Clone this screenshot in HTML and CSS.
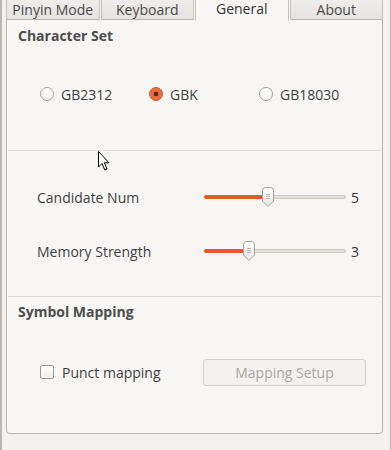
FILE: index.html
```html
<!DOCTYPE html>
<html>
<head>
<meta charset="utf-8">
<link rel="stylesheet" href="styles.css">
</head>
<body>
<div class="window">
  <div class="tabs">
    <div class="tab">Pinyin Mode</div>
    <div class="tab">Keyboard</div>
    <div class="tab active">General</div>
    <div class="tab">About</div>
  </div>
  <div class="panel">
    <section class="sec sec-charset">
      <div class="heading">Character Set</div>
      <div class="radios">
        <label class="radio"><span class="rb"></span>GB2312</label>
        <label class="radio"><span class="rb on"></span>GBK</label>
        <label class="radio"><span class="rb"></span>GB18030</label>
      </div>
    </section>
    <hr class="sep">
    <section class="sec sec-sliders">
      <div class="srow">
        <span class="slabel">Candidate Num</span>
        <div class="slider">
          <div class="track"><div class="fill" style="width:63px"></div></div>
          <svg class="thumb" style="left:58px" width="12" height="20" viewBox="0 0 12 20"><defs><linearGradient id="tg1" x1="0" y1="0" x2="0" y2="1"><stop offset="0" stop-color="#ffffff"/><stop offset="1" stop-color="#e9e6e3"/></linearGradient></defs><path d="M3.5 0.5 H8.5 Q11.5 0.5 11.5 3.5 V14 L6 19.5 L0.5 14 V3.5 Q0.5 0.5 3.5 0.5 Z" fill="url(#tg1)" stroke="#a9a199"/><path d="M4 7.5 H8 M4 9.5 H8 M4 11.5 H8" stroke="#b9b2ab" stroke-width="1"/></svg>
        </div>
        <span class="sval">5</span>
      </div>
      <div class="srow">
        <span class="slabel">Memory Strength</span>
        <div class="slider">
          <div class="track"><div class="fill" style="width:44px"></div></div>
          <svg class="thumb" style="left:39px" width="12" height="20" viewBox="0 0 12 20"><defs><linearGradient id="tg2" x1="0" y1="0" x2="0" y2="1"><stop offset="0" stop-color="#ffffff"/><stop offset="1" stop-color="#e9e6e3"/></linearGradient></defs><path d="M3.5 0.5 H8.5 Q11.5 0.5 11.5 3.5 V14 L6 19.5 L0.5 14 V3.5 Q0.5 0.5 3.5 0.5 Z" fill="url(#tg2)" stroke="#a9a199"/><path d="M4 7.5 H8 M4 9.5 H8 M4 11.5 H8" stroke="#b9b2ab" stroke-width="1"/></svg>
        </div>
        <span class="sval">3</span>
      </div>
    </section>
    <hr class="sep">
    <section class="sec sec-symbol">
      <div class="heading">Symbol Mapping</div>
      <div class="crow">
        <label class="check"><span class="cb"></span>Punct mapping</label>
        <button class="btn" disabled>Mapping Setup</button>
      </div>
    </section>
  </div>
  <svg class="cursor" width="14" height="22" viewBox="0 0 14 22"><path d="M0.5 0.5 V16 L4 12.5 L6.8 19 L9 18 L6.3 11.8 H11 Z" fill="#ffffff" stroke="#000000" stroke-width="1" stroke-linejoin="miter"/></svg>
</div>
</body>
</html>
```
FILE: styles.css
```css
* { box-sizing: border-box; }
html, body { margin: 0; padding: 0; }
body {
  width: 391px;
  height: 450px;
  overflow: hidden;
  background: #f2f1f0;
  font-family: "Open Sans", "DejaVu Sans", sans-serif;
  font-size: 14px;
  color: #3c3c3c;
}
.window {
  position: relative;
  height: 450px;
  border-left: 2px solid #bdb6af;
  border-right: 1px solid #bdb6af;
  padding: 0 7px 0 4px;
}
.tabs {
  display: flex;
  height: 20px;
}
.tab {
  flex: 1;
  text-align: center;
  line-height: 19px;
  height: 20px;
  color: #4a4a4a;
  background: linear-gradient(#efedeb, #e4e1de);
  border: 1px solid #c9c3bd;
  border-top: none;
  border-bottom: 1px solid #bdb6af;
  margin-right: 1px;
}
.tab:last-child { margin-right: 0; }
.tab.active {
  background: #f7f6f5;
  border-bottom-color: #f7f6f5;
  line-height: 17px;
  color: #333;
  position: relative;
  z-index: 1;
  margin-bottom: -1px;
  height: 21px;
}
.panel {
  background: #f7f6f5;
  border: 1px solid #bdb6af;
  border-top: none;
  border-radius: 0 0 4px 4px;
  height: 414px;
  display: flex;
  flex-direction: column;
}
.heading {
  font-weight: bold;
  color: #4d4d4d;
  padding-left: 11px;
  height: 18px;
  line-height: 18px;
}
.sec-charset { padding-top: 7px; height: 130px; }
.radios {
  display: flex;
  margin-top: 40px;
  height: 18px;
  align-items: center;
}
.radio {
  display: flex;
  align-items: center;
  gap: 7px;
  color: #3f3f3f;
}
.radio:nth-child(1) { margin-left: 33px; width: 109px; }
.radio:nth-child(2) { width: 110px; }
.rb {
  width: 14px;
  height: 14px;
  border-radius: 50%;
  border: 1px solid #a9a29b;
  background: linear-gradient(#ffffff, #f3f1ef);
  display: inline-block;
}
.rb.on {
  border-color: #c4552b;
  background: radial-gradient(circle, #5a2a1a 0 2px, #e2683b 2.6px, #f07a49 100%);
}
.sep {
  margin: 0 1px;
  border: none;
  border-top: 1px solid #dedbd8;
  height: 0;
}
.sec-sliders { height: 145px; padding-top: 35px; }
.srow {
  display: flex;
  align-items: center;
  height: 22px;
  margin-bottom: 32px;
}
.slabel {
  width: 197px;
  padding-left: 30px;
  color: #3f3f3f;
}
.slider {
  position: relative;
  width: 142px;
  height: 22px;
}
.track {
  position: absolute;
  left: 0;
  right: 0;
  top: 9px;
  height: 4px;
  border-radius: 2px;
  background: #e5e1dd;
  border: 1px solid #cdc6bf;
}
.fill {
  position: absolute;
  left: -1px;
  top: -1px;
  height: 4px;
  border-radius: 2px;
  background: #e2592a;
}
.thumb {
  position: absolute;
  top: 1px;
}
.sval {
  margin-left: 5px;
  color: #333;
}
.sec-symbol { padding-top: 6px; flex: 1; }
.crow {
  display: flex;
  align-items: center;
  margin-top: 37px;
  height: 28px;
}
.check {
  display: flex;
  align-items: center;
  gap: 8px;
  margin-left: 33px;
  width: 163px;
  color: #3f3f3f;
}
.cb {
  width: 14px;
  height: 14px;
  border-radius: 2px;
  border: 1px solid #9f968e;
  background: linear-gradient(#ffffff, #f1efed);
  display: inline-block;
}
.btn {
  width: 163px;
  height: 27px;
  font: inherit;
  color: #aca6a0;
  background: #f3f2f1;
  border: 1px solid #d6d1cc;
  border-radius: 3px;
}
.cursor {
  position: absolute;
  left: 96px;
  top: 151px;
}
```
